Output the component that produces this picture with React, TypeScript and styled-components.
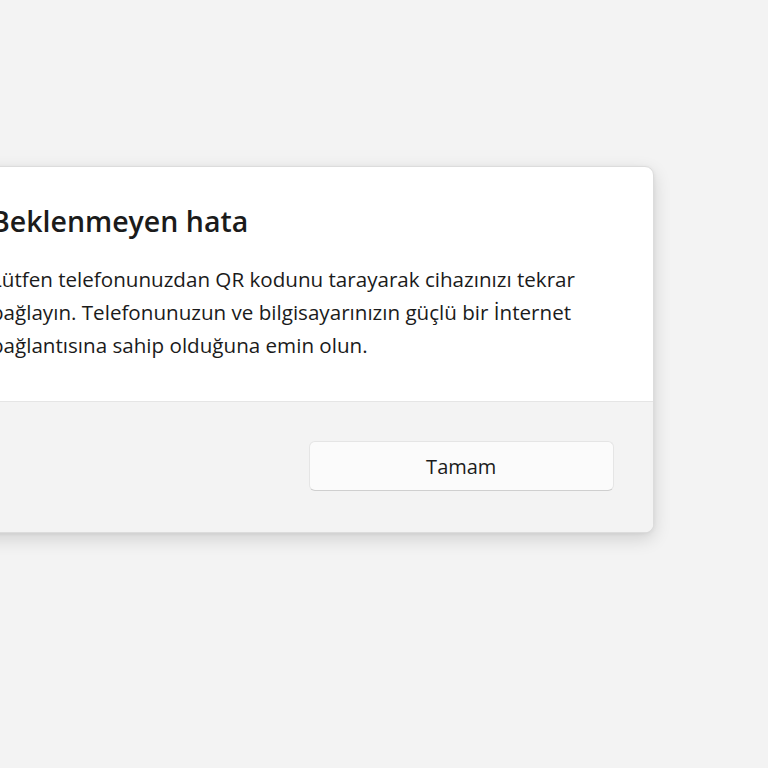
import styled, { createGlobalStyle } from 'styled-components';

const GlobalStyle = createGlobalStyle`
  html, body {
    margin: 0;
    padding: 0;
    background: #f3f3f3;
    font-family: "Open Sans", "Noto Sans", sans-serif;
    overflow: hidden;
  }
`

const Page = styled.main`
  width: 768px;
  height: 768px;
  padding-top: 166px;
  box-sizing: border-box;
`

const Dialog = styled.section`
  width: 704px;
  margin-left: -50px;
  background: #ffffff;
  border: 1px solid #dcdcdc;
  border-radius: 9px;
  overflow: hidden;
  box-shadow: 0 6px 18px rgba(0, 0, 0, 0.14), 0 1px 4px rgba(0, 0, 0, 0.06);
  box-sizing: border-box;
`

const Content = styled.div`
  padding: 36px 40px 39px 40px;
  color: #1b1b1b;

  & > .title {
    margin: 0 0 24px 0;
    font-size: 28.5px;
    line-height: 36px;
    font-weight: 600;
  }

  & > .message {
    margin: 0;
    font-size: 20.6px;
    line-height: 33px;
    width: 610px;
  }
`

const Footer = styled.div`
  display: grid;
  grid-template-columns: 1fr 1fr;
  column-gap: 12px;
  padding: 39px 39px 41px 40px;
  background: #f3f3f3;
  border-top: 1px solid #e5e5e5;
`

const Button = styled.button<{ $column: number }>`
  grid-column: ${p => p.$column};
  height: 50px;
  padding-top: 2px;
  background: #fbfbfb;
  border: 1px solid #e5e5e5;
  border-bottom-color: #cfcfcf;
  border-radius: 6px;
  font-family: inherit;
  font-size: 20px;
  color: #1b1b1b;
`

const App = () => {
  return <Page>
    <GlobalStyle />
    <Dialog>
      <Content>
        <h1 className="title">Beklenmeyen hata</h1>
        <p className="message">
          Lütfen telefonunuzdan QR kodunu tarayarak cihazınızı tekrar bağlayın. Telefonunuzun ve bilgisayarınızın güçlü bir İnternet bağlantısına sahip olduğuna emin olun.
        </p>
      </Content>
      <Footer>
        <Button $column={2}>Tamam</Button>
      </Footer>
    </Dialog>
  </Page>
};

export default App;
